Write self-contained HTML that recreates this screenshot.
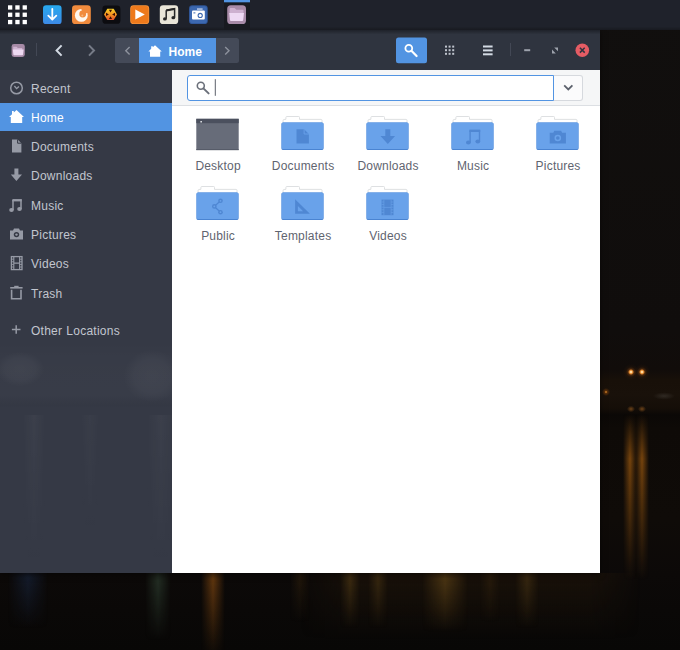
<!DOCTYPE html>
<html><head><meta charset="utf-8">
<style>
*{box-sizing:border-box;margin:0;padding:0}
html,body{width:680px;height:650px;overflow:hidden;background:#0b0908;font-family:"Liberation Sans",sans-serif;}
.abs{position:absolute}
#bg{position:absolute;left:0;top:0;width:680px;height:650px;background:#0c0a09;overflow:hidden}
#panel{position:absolute;left:0;top:0;width:680px;height:30px;background:#1f222b;z-index:5}
#win{position:absolute;left:0;top:30px;width:600px;height:543px;box-shadow:0 1px 6px rgba(0,0,0,.5);}
#hdr{position:absolute;left:0;top:0;width:600px;height:40px;background:#2f343f;}
#side{position:absolute;left:0;top:40px;width:172px;height:503px;background:#353945;overflow:hidden}
#main{position:absolute;left:172px;top:40px;width:428px;height:503px;background:#fff;}
#sbar{position:absolute;left:0;top:0;width:428px;height:36px;background:#f5f6f7;border-bottom:1px solid #dcdfe3;}
.si{position:absolute;left:0;width:172px;height:28px;color:#c2c6cf;font-size:12px;line-height:30px;padding-left:31px;white-space:nowrap;letter-spacing:.25px;word-spacing:.5px}
.si.sel{background:#5294e2;color:#fff}
.si svg{position:absolute;left:8px;top:6px;width:16px;height:16px}
.lbl{position:absolute;width:95px;text-align:center;font-size:12px;color:#5f646f;line-height:15px;letter-spacing:.2px;padding-left:.2px}
.fi{position:absolute;width:43px;height:35px}
</style></head><body>
<div id="bg">

<div class="abs" style="left:0;top:0;width:680px;height:650px;background:linear-gradient(to bottom,#110f0e 0px,#100d0c 330px,#110c0a 370px,#181009 380px,#19110a 395px,#150e08 408px,#0b0806 415px,#0e0a07 428px,#0f0b08 520px,#0c0908 575px,#0a0807 610px,#080706 650px)"></div>
<!-- lights -->
<div class="abs" style="left:618.8px;top:359.5px;width:24px;height:24px;background:radial-gradient(circle,#ffefcf 0px,#ffd596 0.8px,#e08428 1.8px,rgba(160,80,15,.38) 3px,rgba(100,50,10,.12) 5px,rgba(0,0,0,0) 8px)"></div>
<div class="abs" style="left:630.3px;top:360px;width:24px;height:24px;background:radial-gradient(circle,#ffefcf 0px,#ffd596 0.8px,#e08428 1.8px,rgba(160,80,15,.38) 3px,rgba(100,50,10,.12) 5px,rgba(0,0,0,0) 8px)"></div>
<div class="abs" style="left:600px;top:386px;width:12px;height:12px;background:radial-gradient(circle,#e89030 0px,rgba(160,80,10,.45) 1.5px,rgba(0,0,0,0) 4px)"></div>
<div class="abs" style="left:626px;top:405px;width:10px;height:8px;background:radial-gradient(ellipse,rgba(200,120,40,.5) 0px,rgba(0,0,0,0) 4px)"></div>
<div class="abs" style="left:637px;top:405px;width:10px;height:8px;background:radial-gradient(ellipse,rgba(200,120,40,.5) 0px,rgba(0,0,0,0) 4px)"></div>
<div class="abs" style="left:652px;top:392px;width:24px;height:8px;background:radial-gradient(ellipse at 50% 50%,rgba(75,70,64,.45) 0px,rgba(0,0,0,0) 11px)"></div>
<div class="abs" style="left:622.8px;top:414px;width:14px;height:166px;background:linear-gradient(to bottom,rgba(0,0,0,0),rgba(125,72,14,.95) 27%,rgba(0,0,0,0));-webkit-mask-image:linear-gradient(to right,transparent,#000 50%,transparent);mask-image:linear-gradient(to right,transparent,#000 50%,transparent)"></div>
<div class="abs" style="left:634.6px;top:414px;width:14px;height:166px;background:linear-gradient(to bottom,rgba(0,0,0,0),rgba(125,72,14,.95) 27%,rgba(0,0,0,0));-webkit-mask-image:linear-gradient(to right,transparent,#000 50%,transparent);mask-image:linear-gradient(to right,transparent,#000 50%,transparent)"></div>
<div class="abs" style="left:300px;top:573px;width:340px;height:66px;background:linear-gradient(to bottom,rgba(44,29,11,.4),rgba(40,26,10,0));-webkit-mask-image:linear-gradient(to right,transparent,#000 15%,#000 85%,transparent);mask-image:linear-gradient(to right,transparent,#000 15%,#000 85%,transparent)"></div>
<div class="abs" style="left:8px;top:556px;width:40px;height:72px;background:linear-gradient(to bottom,rgba(0,0,0,0),rgba(22,32,52,.8) 30%,rgba(0,0,0,0));-webkit-mask-image:linear-gradient(to right,transparent,#000 50%,transparent);mask-image:linear-gradient(to right,transparent,#000 50%,transparent)"></div>
<div class="abs" style="left:145px;top:556px;width:26px;height:84px;background:linear-gradient(to bottom,rgba(0,0,0,0),rgba(40,54,42,.8) 30%,rgba(0,0,0,0));-webkit-mask-image:linear-gradient(to right,transparent,#000 50%,transparent);mask-image:linear-gradient(to right,transparent,#000 50%,transparent)"></div>
<div class="abs" style="left:200.6px;top:552px;width:24px;height:108px;background:linear-gradient(to bottom,rgba(0,0,0,0),rgba(110,62,16,.85) 25%,rgba(0,0,0,0));-webkit-mask-image:linear-gradient(to right,transparent,#000 50%,transparent);mask-image:linear-gradient(to right,transparent,#000 50%,transparent)"></div>
<div class="abs" style="left:340px;top:556px;width:20px;height:72px;background:linear-gradient(to bottom,rgba(0,0,0,0),rgba(75,54,20,.7) 30%,rgba(0,0,0,0));-webkit-mask-image:linear-gradient(to right,transparent,#000 50%,transparent);mask-image:linear-gradient(to right,transparent,#000 50%,transparent)"></div>
<div class="abs" style="left:368px;top:556px;width:20px;height:72px;background:linear-gradient(to bottom,rgba(0,0,0,0),rgba(75,54,20,.6) 30%,rgba(0,0,0,0));-webkit-mask-image:linear-gradient(to right,transparent,#000 50%,transparent);mask-image:linear-gradient(to right,transparent,#000 50%,transparent)"></div>
<div class="abs" style="left:422px;top:556px;width:46px;height:76px;background:linear-gradient(to bottom,rgba(0,0,0,0),rgba(90,64,22,.75) 30%,rgba(0,0,0,0));-webkit-mask-image:linear-gradient(to right,transparent,#000 50%,transparent);mask-image:linear-gradient(to right,transparent,#000 50%,transparent)"></div>
<div class="abs" style="left:515px;top:556px;width:24px;height:72px;background:linear-gradient(to bottom,rgba(0,0,0,0),rgba(75,54,20,.6) 30%,rgba(0,0,0,0));-webkit-mask-image:linear-gradient(to right,transparent,#000 50%,transparent);mask-image:linear-gradient(to right,transparent,#000 50%,transparent)"></div>
<div class="abs" style="left:290px;top:556px;width:20px;height:66px;background:linear-gradient(to bottom,rgba(0,0,0,0),rgba(55,38,14,.5) 30%,rgba(0,0,0,0));-webkit-mask-image:linear-gradient(to right,transparent,#000 50%,transparent);mask-image:linear-gradient(to right,transparent,#000 50%,transparent)"></div>
<div class="abs" style="left:480px;top:556px;width:20px;height:66px;background:linear-gradient(to bottom,rgba(0,0,0,0),rgba(55,38,14,.5) 30%,rgba(0,0,0,0));-webkit-mask-image:linear-gradient(to right,transparent,#000 50%,transparent);mask-image:linear-gradient(to right,transparent,#000 50%,transparent)"></div>

</div>
<div id="panel">

<svg class="abs" style="left:0;top:0" width="680" height="30" viewBox="0 0 680 30">
<defs>
<linearGradient id="psh" x1="0" y1="0" x2="0" y2="1"><stop offset="0" stop-color="#1f222b"/><stop offset="1" stop-color="#181a20"/></linearGradient><linearGradient id="gdl" x1="0" y1="0" x2="0" y2="1"><stop offset="0" stop-color="#27a9ef"/><stop offset="1" stop-color="#3d8ae6"/></linearGradient>
<linearGradient id="ghex" x1="0" y1="0" x2="0" y2="1"><stop offset="0" stop-color="#f6d22a"/><stop offset=".5" stop-color="#f59420"/><stop offset="1" stop-color="#e2512c"/></linearGradient>
</defs>
<rect x="0" y="26.5" width="680" height="3.5" fill="url(#psh)"/><rect x="224" y="0" width="26" height="30" fill="#181a20"/>
<rect x="224" y="0" width="26" height="2.3" fill="#5294e2"/>
<g fill="#fff">
<rect x="8" y="5.3" width="4.3" height="4.3"/><rect x="15.3" y="5.3" width="4.3" height="4.3"/><rect x="22.6" y="5.3" width="4.3" height="4.3"/>
<rect x="8" y="12.6" width="4.3" height="4.3"/><rect x="15.3" y="12.6" width="4.3" height="4.3"/><rect x="22.6" y="12.6" width="4.3" height="4.3"/>
<rect x="8" y="19.9" width="4.3" height="4.3"/><rect x="15.3" y="19.9" width="4.3" height="4.3"/><rect x="22.6" y="19.9" width="4.3" height="4.3"/>
</g>
<!-- download -->
<rect x="43" y="5.3" width="18.6" height="18.8" rx="3.2" fill="url(#gdl)"/>
<path d="M52.3 8.8 V19 M48.3 15.6 L52.3 19.6 L56.3 15.6" fill="none" stroke="#fff" stroke-width="1.8" stroke-linecap="round" stroke-linejoin="round"/>
<!-- firefox-like -->
<rect x="72" y="5.3" width="18.8" height="18.8" rx="3.4" fill="#f18b3d"/>
<mask id="ffm"><rect x="70" y="3" width="24" height="24" fill="#000"/><circle cx="81.3" cy="15.4" r="6.4" fill="#fff"/><circle cx="82.7" cy="14" r="3.4" fill="#000"/><path d="M82.7 14 L79.8 3 H95 V11.4Z" fill="#000"/></mask>
<rect x="72" y="5" width="19" height="19" fill="#fff7ee" mask="url(#ffm)"/>
<circle cx="82.3" cy="15.4" r="1" fill="#f9b87c"/>
<!-- hex X -->
<rect x="102.4" y="5.6" width="18" height="18.2" rx="3.4" fill="#0c0c10"/>
<path d="M104 14.4 L107.3 8.8 H113.7 L117 14.4 L113.7 20 H107.3 Z" fill="url(#ghex)"/>
<g fill="#3a0d04"><path d="M108.9 9.8 H112.1 L110.5 12.6Z"/><path d="M108.9 19 H112.1 L110.5 16.2Z"/><path d="M106 12.8 L108.9 14.4 L106 16Z"/><path d="M115 12.8 L112.1 14.4 L115 16Z"/></g>
<!-- play -->
<rect x="130.2" y="5.3" width="19" height="18.8" rx="3.4" fill="#f5923a"/>
<rect x="131" y="6.1" width="17.4" height="17.2" rx="2.8" fill="#ee7a1c"/>
<path d="M135.3 9.6 L144.8 14.6 L135.3 19.6 Z" fill="#fff"/>
<!-- music -->
<rect x="159.8" y="5.3" width="18.4" height="18.8" rx="3.4" fill="#e9e5d8"/>
<path d="M166.2 10.2 L174.6 8.6 V17.6 M166.2 10.2 V18.8" fill="none" stroke="#262626" stroke-width="1.5"/>
<path d="M166.2 9.4 L174.6 7.9 V10.1 L166.2 11.6Z" fill="#262626"/>
<ellipse cx="164.9" cy="18.9" rx="1.9" ry="1.6" fill="#262626"/><ellipse cx="173.3" cy="17.7" rx="1.9" ry="1.6" fill="#262626"/>
<!-- camera -->
<rect x="189" y="5.3" width="18.8" height="18.8" rx="3.4" fill="#2f5596"/>
<rect x="189.9" y="6.2" width="17" height="17" rx="2.6" fill="#3c68b0"/>
<rect x="192" y="10.6" width="12.8" height="9" rx="1" fill="#fff"/>
<rect x="197" y="8.5" width="5.6" height="1.1" fill="#e8eefc"/>
<circle cx="200.2" cy="15.4" r="2.6" fill="#3c68b0"/><circle cx="200.2" cy="15.4" r="1.5" fill="#fff"/>
<rect x="193.4" y="12.4" width="2" height="1" fill="#3c68b0"/>
<!-- files -->
<rect x="227.2" y="5.3" width="18.8" height="18.8" rx="3.6" fill="#a88ba8"/>
<path d="M229.6 9 Q229.6 8 230.6 8 H234.6 L236.4 9.8 H242.6 Q243.6 9.8 243.6 10.8 V14 H229.6 Z" fill="#cdb0cf"/>
<path d="M229.2 13 H244 L243.2 20.2 Q243.1 21 242.2 21 H231 Q230.1 21 230 20.2 Z" fill="#eed9f3"/>
</svg>

</div>
<div id="win">
 <div id="hdr">

<svg class="abs" style="left:0;top:0" width="600" height="40" viewBox="0 30 600 40">
<defs><linearGradient id="hsh" x1="0" y1="0" x2="0" y2="1"><stop offset="0" stop-color="#1f222a"/><stop offset="1" stop-color="#2f343f"/></linearGradient></defs><rect x="0" y="30" width="600" height="4.5" fill="url(#hsh)"/>
<!-- small files icon -->
<rect x="11.6" y="44" width="13.2" height="13" rx="2.4" fill="#a68aa6"/>
<path d="M13.2 46.8 H16.6 L17.8 48 H22.2 V50 H13.2Z" fill="#cfb3d1"/>
<path d="M12.8 49.6 H23.6 L23 54.6 Q22.9 55.2 22.3 55.2 H14.1 Q13.5 55.2 13.4 54.6Z" fill="#eedaf2"/>
<rect x="36" y="43" width="1" height="13" fill="#434855"/>
<path d="M61.6 45.4 L56.6 50.5 L61.6 55.6" fill="none" stroke="#d3dae3" stroke-width="2"/>
<path d="M89 45.4 L94 50.5 L89 55.6" fill="none" stroke="#767b87" stroke-width="2"/>
<!-- pathbar -->
<rect x="115" y="38" width="124" height="25" rx="2.5" fill="#444a58"/>
<rect x="139" y="38" width="77" height="25" fill="#5294e2"/>
<path d="M129.6 47 L125.8 50.7 L129.6 54.4" fill="none" stroke="#8d929d" stroke-width="1.4"/>
<path d="M225.2 47 L229 50.7 L225.2 54.4" fill="none" stroke="#8d929d" stroke-width="1.4"/>
<path d="M155 45.2 L161.8 51.4 H160.2 V56.8 H150 V51.4 H148.4 L151.2 48.8 V46.2 H152.8 V47.3 Z" fill="#fff"/>
<!-- search btn -->
<rect x="396" y="37.6" width="31" height="25.6" rx="2.5" fill="#5294e2"/>
<circle cx="408.8" cy="48.2" r="3.4" fill="none" stroke="#fff" stroke-width="1.8"/>
<path d="M411.4 50.8 L416.6 56" stroke="#fff" stroke-width="2.2" stroke-linecap="round"/>
<g fill="#bfc4cd">
<rect x="445" y="45.6" width="2" height="2"/><rect x="448.6" y="45.6" width="2" height="2"/><rect x="452.2" y="45.6" width="2" height="2"/>
<rect x="445" y="49.2" width="2" height="2"/><rect x="448.6" y="49.2" width="2" height="2"/><rect x="452.2" y="49.2" width="2" height="2"/>
<rect x="445" y="52.8" width="2" height="2"/><rect x="448.6" y="52.8" width="2" height="2"/><rect x="452.2" y="52.8" width="2" height="2"/>
</g>
<g fill="#d3dae3"><rect x="483" y="45.5" width="9.6" height="2"/><rect x="483" y="49.4" width="9.6" height="2"/><rect x="483" y="53.3" width="9.6" height="2"/></g>
<rect x="510" y="43" width="1" height="13" fill="#434855"/>
<rect x="524.2" y="49.2" width="6" height="2" fill="#9da2ac"/>
<path d="M554.2 47.4 H558 V51.2Z M552 49.6 V53.4 H555.8Z" fill="#9da2ac"/>
<circle cx="582.3" cy="50.2" r="6.8" fill="#e55c64"/>
<path d="M579.9 47.8 L584.7 52.6 M584.7 47.8 L579.9 52.6" stroke="#2f343f" stroke-width="1.5"/>
</svg>
<div class="abs" style="left:168.6px;top:14.5px;font-size:12px;font-weight:bold;color:#fff;line-height:14px">Home</div>

 </div>
 <div id="side">

<div class="abs" style="left:0;top:272px;width:172px;height:66px;background:linear-gradient(to bottom,rgba(255,255,255,0),rgba(255,255,255,.012) 25%,rgba(255,255,255,.014) 80%,rgba(0,0,0,.02) 96%,rgba(0,0,0,0))"></div>
<div class="abs" style="left:-4px;top:282px;width:48px;height:34px;background:radial-gradient(ellipse,rgba(255,255,255,.045),rgba(255,255,255,.03) 45%,rgba(255,255,255,0) 72%)"></div>
<div class="abs" style="left:124px;top:280px;width:56px;height:52px;background:radial-gradient(ellipse,rgba(255,255,255,.045),rgba(255,255,255,.03) 45%,rgba(255,255,255,0) 72%)"></div>
<div class="abs" style="left:22px;top:345px;width:24px;height:150px;background:linear-gradient(to bottom,rgba(255,255,255,.035),rgba(255,255,255,0));-webkit-mask-image:linear-gradient(to right,transparent,#000 50%,transparent);mask-image:linear-gradient(to right,transparent,#000 50%,transparent)"></div>
<div class="abs" style="left:80px;top:345px;width:20px;height:120px;background:linear-gradient(to bottom,rgba(255,255,255,.025),rgba(255,255,255,0));-webkit-mask-image:linear-gradient(to right,transparent,#000 50%,transparent);mask-image:linear-gradient(to right,transparent,#000 50%,transparent)"></div>
<div class="abs" style="left:146px;top:345px;width:30px;height:150px;background:linear-gradient(to bottom,rgba(255,255,255,.035),rgba(255,255,255,0));-webkit-mask-image:linear-gradient(to right,transparent,#000 50%,transparent);mask-image:linear-gradient(to right,transparent,#000 50%,transparent)"></div>
<div class="si" style="top:4px"><svg viewBox="0 0 16 16"><circle cx="8.5" cy="8" r="5.8" fill="none" stroke="#969aa5" stroke-width="1.5"/><path d="M6.4 6 L8.6 8.6 L11 6.4" fill="none" stroke="#969aa5" stroke-width="1.3"/></svg>Recent</div>
<div class="si sel" style="top:33px"><svg viewBox="0 0 16 16"><path d="M8.5 1 L16 8 H14.2 V14 H2.8 V8 H1 L4 5.2 V2 H5.8 V3.5 Z" fill="#fff"/></svg>Home</div>
<div class="si" style="top:62px"><svg viewBox="0 0 16 16"><path d="M4 1.4 H9.6 L13.4 5.2 V14.6 H4Z" fill="#969aa5"/><path d="M9.6 1.4 V5.2 H13.4" fill="none" stroke="#353945" stroke-width="1"/></svg>Documents</div>
<div class="si" style="top:91px"><svg viewBox="0 0 16 16"><path d="M6.4 1.4 H10.4 V7.4 H14 L8.4 14 L2.8 7.4 H6.4Z" fill="#969aa5"/></svg>Downloads</div>
<div class="si" style="top:121px"><svg viewBox="0 0 16 16"><path d="M5 3 H13 V12" fill="none" stroke="#969aa5" stroke-width="1.5"/><path d="M5 3 V13" fill="none" stroke="#969aa5" stroke-width="1.5"/><rect x="4.3" y="2.2" width="9.4" height="2.2" fill="#969aa5"/><ellipse cx="3.5" cy="13" rx="2.3" ry="1.9" fill="#969aa5"/><ellipse cx="11.5" cy="12" rx="2.3" ry="1.9" fill="#969aa5"/></svg>Music</div>
<div class="si" style="top:150px"><svg viewBox="0 0 16 16"><path d="M2 4.4 H5 L6 2.6 H11 L12 4.4 H15 V13.4 H2Z" fill="#969aa5"/><circle cx="8.5" cy="8.6" r="2.7" fill="#353945"/><circle cx="8.5" cy="8.6" r="1.2" fill="#969aa5"/></svg>Pictures</div>
<div class="si" style="top:179px"><svg viewBox="0 0 16 16"><rect x="3.4" y="1.6" width="10.6" height="13" fill="none" stroke="#969aa5" stroke-width="1.3"/><path d="M5.8 1.6 V14.6 M11.6 1.6 V14.6 M5.8 8.1 H11.6" stroke="#969aa5" stroke-width="1.1" fill="none"/><path d="M3.4 4.2 H5.8 M3.4 6.8 H5.8 M3.4 9.4 H5.8 M3.4 12 H5.8 M11.6 4.2 H14 M11.6 6.8 H14 M11.6 9.4 H14 M11.6 12 H14" stroke="#969aa5" stroke-width="0.9"/></svg>Videos</div>
<div class="si" style="top:209px"><svg viewBox="0 0 16 16"><path d="M3.6 4.8 V13.8 H13 V4.8" fill="none" stroke="#969aa5" stroke-width="1.6"/><rect x="2.2" y="2" width="12.4" height="1.6" fill="#969aa5"/><rect x="6.2" y="0.8" width="4.4" height="1.4" fill="#969aa5"/></svg>Trash</div>
<div class="si" style="top:246px"><svg viewBox="0 0 16 16"><path d="M8.2 3.2 V11.8 M3.9 7.5 H12.5" stroke="#969aa5" stroke-width="1.5" fill="none"/></svg>Other Locations</div>

 </div>
 <div id="main">
  <div id="sbar">

<div class="abs" style="left:15px;top:5px;width:367px;height:26px;background:#fff;border:1px solid #5294e2;border-radius:3px 0 0 3px;z-index:2"></div>
<div class="abs" style="left:381px;top:5px;width:30px;height:26px;background:#fbfbfc;border:1px solid #d6d9de;border-left:none;border-radius:0 3px 3px 0"></div>
<svg class="abs" style="left:0;top:0;z-index:3" width="428" height="36" viewBox="172 70 428 36">
<circle cx="200.8" cy="85.8" r="3.5" fill="none" stroke="#6b707a" stroke-width="1.6"/>
<path d="M203.4 88.4 L208.6 93.4" stroke="#6b707a" stroke-width="2" stroke-linecap="round"/>
<rect x="214.8" y="79.2" width="1" height="16.6" fill="#5c616c"/>
<path d="M564.2 85.4 L568.3 89.4 L572.4 85.4" fill="none" stroke="#5c616c" stroke-width="1.8"/>
</svg>

  </div>
<svg class="fi" style="left:24px;top:46px" viewBox="0 0 43 35"><rect x="0.3" y="2.8" width="42.4" height="31.3" fill="#676c79"/><rect x="0.3" y="2.8" width="42.4" height="4.4" fill="#4b505e"/><rect x="0.3" y="33.1" width="42.4" height="1" fill="#565b68"/><rect x="4.4" y="5" width="1.5" height="1.5" fill="#e8eaee"/></svg>
<div class="lbl" style="left:-1.5px;top:89px">Desktop</div>
<svg class="fi" style="left:109px;top:46px" viewBox="0 0 43 35"><g transform="translate(0.5,0)">
<path d="M4.4 1.4 Q4.4 0.5 5.3 0.5 H17.2 Q18 0.5 18 1.4 V3.4 H39.6 Q40.5 3.4 40.5 4.3 V10 H1.6 V4.4 Q1.6 3.6 2.4 3.5 L4.4 3.3 Z" fill="#fff" stroke="#dadcdf" stroke-width="0.9"/>
<rect x="0" y="6.4" width="42" height="27.6" rx="1.6" fill="#4a84d2"/>
<rect x="0" y="6.4" width="42" height="26.7" rx="1.6" fill="#69a2ea"/>
<path d="M15 13.2 H22.6 L27.4 18 V27.6 H15Z" fill="#4f87d3"/><path d="M22.6 13.2 V18 H27.4" fill="none" stroke="#69a2ea" stroke-width="0.9"/></g></svg>
<div class="lbl" style="left:83.5px;top:89px">Documents</div>
<svg class="fi" style="left:194px;top:46px" viewBox="0 0 43 35"><g transform="translate(0.5,0)">
<path d="M4.4 1.4 Q4.4 0.5 5.3 0.5 H17.2 Q18 0.5 18 1.4 V3.4 H39.6 Q40.5 3.4 40.5 4.3 V10 H1.6 V4.4 Q1.6 3.6 2.4 3.5 L4.4 3.3 Z" fill="#fff" stroke="#dadcdf" stroke-width="0.9"/>
<rect x="0" y="6.4" width="42" height="27.6" rx="1.6" fill="#4a84d2"/>
<rect x="0" y="6.4" width="42" height="26.7" rx="1.6" fill="#69a2ea"/>
<path d="M18.8 13.2 H23.8 V20 H28.6 L21.3 28 L14 20 H18.8Z" fill="#4f87d3"/></g></svg>
<div class="lbl" style="left:168.5px;top:89px">Downloads</div>
<svg class="fi" style="left:279px;top:46px" viewBox="0 0 43 35"><g transform="translate(0.5,0)">
<path d="M4.4 1.4 Q4.4 0.5 5.3 0.5 H17.2 Q18 0.5 18 1.4 V3.4 H39.6 Q40.5 3.4 40.5 4.3 V10 H1.6 V4.4 Q1.6 3.6 2.4 3.5 L4.4 3.3 Z" fill="#fff" stroke="#dadcdf" stroke-width="0.9"/>
<rect x="0" y="6.4" width="42" height="27.6" rx="1.6" fill="#4a84d2"/>
<rect x="0" y="6.4" width="42" height="26.7" rx="1.6" fill="#69a2ea"/>
<path d="M18.6 14.6 H28 V25.4 M18.6 14.6 V26.4" fill="none" stroke="#4f87d3" stroke-width="1.4"/><rect x="17.9" y="13.6" width="10.8" height="2.4" fill="#4f87d3"/><ellipse cx="16.9" cy="26.4" rx="2.4" ry="2" fill="#4f87d3"/><ellipse cx="26.3" cy="25.4" rx="2.4" ry="2" fill="#4f87d3"/></g></svg>
<div class="lbl" style="left:253.5px;top:89px">Music</div>
<svg class="fi" style="left:364px;top:46px" viewBox="0 0 43 35"><g transform="translate(0.5,0)">
<path d="M4.4 1.4 Q4.4 0.5 5.3 0.5 H17.2 Q18 0.5 18 1.4 V3.4 H39.6 Q40.5 3.4 40.5 4.3 V10 H1.6 V4.4 Q1.6 3.6 2.4 3.5 L4.4 3.3 Z" fill="#fff" stroke="#dadcdf" stroke-width="0.9"/>
<rect x="0" y="6.4" width="42" height="27.6" rx="1.6" fill="#4a84d2"/>
<rect x="0" y="6.4" width="42" height="26.7" rx="1.6" fill="#69a2ea"/>
<path d="M13.2 16.8 H16.8 L17.8 14.8 H24.6 L25.6 16.8 H29.4 V27.6 H13.2Z" fill="#4f87d3"/><circle cx="21.3" cy="22" r="3.3" fill="#69a2ea"/><circle cx="21.3" cy="22" r="1.8" fill="#4f87d3"/></g></svg>
<div class="lbl" style="left:338.5px;top:89px">Pictures</div>
<svg class="fi" style="left:24px;top:116px" viewBox="0 0 43 35"><g transform="translate(0.5,0)">
<path d="M4.4 1.4 Q4.4 0.5 5.3 0.5 H17.2 Q18 0.5 18 1.4 V3.4 H39.6 Q40.5 3.4 40.5 4.3 V10 H1.6 V4.4 Q1.6 3.6 2.4 3.5 L4.4 3.3 Z" fill="#fff" stroke="#dadcdf" stroke-width="0.9"/>
<rect x="0" y="6.4" width="42" height="27.6" rx="1.6" fill="#4a84d2"/>
<rect x="0" y="6.4" width="42" height="26.7" rx="1.6" fill="#69a2ea"/>
<path d="M24 14.8 L17.8 20.4 L24 26.2" fill="none" stroke="#4f87d3" stroke-width="1.3"/><circle cx="24" cy="14.8" r="2.3" fill="#4f87d3"/><circle cx="17.8" cy="20.4" r="2.3" fill="#4f87d3"/><circle cx="24" cy="26.2" r="2.3" fill="#4f87d3"/><circle cx="24" cy="14.8" r="0.9" fill="#69a2ea"/><circle cx="17.8" cy="20.4" r="0.9" fill="#69a2ea"/><circle cx="24" cy="26.2" r="0.9" fill="#69a2ea"/></g></svg>
<div class="lbl" style="left:-1.5px;top:159px">Public</div>
<svg class="fi" style="left:109px;top:116px" viewBox="0 0 43 35"><g transform="translate(0.5,0)">
<path d="M4.4 1.4 Q4.4 0.5 5.3 0.5 H17.2 Q18 0.5 18 1.4 V3.4 H39.6 Q40.5 3.4 40.5 4.3 V10 H1.6 V4.4 Q1.6 3.6 2.4 3.5 L4.4 3.3 Z" fill="#fff" stroke="#dadcdf" stroke-width="0.9"/>
<rect x="0" y="6.4" width="42" height="27.6" rx="1.6" fill="#4a84d2"/>
<rect x="0" y="6.4" width="42" height="26.7" rx="1.6" fill="#69a2ea"/>
<path d="M13.6 13.2 L28.4 27.8 H13.6Z" fill="#4f87d3"/><path d="M16.4 20 L21.6 25.2 H16.4Z" fill="#69a2ea"/></g></svg>
<div class="lbl" style="left:83.5px;top:159px">Templates</div>
<svg class="fi" style="left:194px;top:116px" viewBox="0 0 43 35"><g transform="translate(0.5,0)">
<path d="M4.4 1.4 Q4.4 0.5 5.3 0.5 H17.2 Q18 0.5 18 1.4 V3.4 H39.6 Q40.5 3.4 40.5 4.3 V10 H1.6 V4.4 Q1.6 3.6 2.4 3.5 L4.4 3.3 Z" fill="#fff" stroke="#dadcdf" stroke-width="0.9"/>
<rect x="0" y="6.4" width="42" height="27.6" rx="1.6" fill="#4a84d2"/>
<rect x="0" y="6.4" width="42" height="26.7" rx="1.6" fill="#69a2ea"/>
<g transform="translate(-0.4,1)"><rect x="15.4" y="12.6" width="12" height="15.6" fill="#4f87d3"/><path d="M17.8 12.6 V28.2 M25 12.6 V28.2 M17.8 20.4 H25" stroke="#69a2ea" stroke-width="0.6"/><path d="M15.4 15 H17.8 M15.4 17.6 H17.8 M15.4 20.2 H17.8 M15.4 22.8 H17.8 M15.4 25.4 H17.8 M25 15 H27.4 M25 17.6 H27.4 M25 20.2 H27.4 M25 22.8 H27.4 M25 25.4 H27.4" stroke="#69a2ea" stroke-width="0.6"/></g></g></svg>
<div class="lbl" style="left:168.5px;top:159px">Videos</div>

 </div>
</div>
</body></html>
